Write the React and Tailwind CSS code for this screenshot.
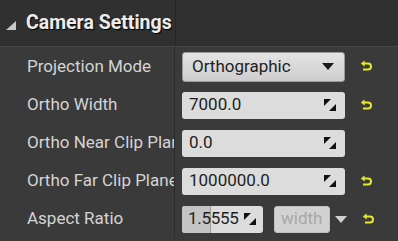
import React from 'react';

const ResetIcon = () => (
  <svg width="13" height="13" viewBox="0 0 13 13" className="shrink-0">
    <path d="M4 3.5 H8 A3 3 0 0 1 8 9.5 H3" fill="none" stroke="#e8e82a" strokeWidth="2" />
    <path d="M0.8 3.5 L4.6 0.6 L4.6 6.4 Z" fill="#e8e82a" />
  </svg>
);

const SpinIcon = () => (
  <svg width="12" height="12" viewBox="0 0 12 12" className="shrink-0">
    <path d="M0 0 H7 L0 7 Z" fill="#111" />
    <path d="M12 12 H5 L12 5 Z" fill="#111" />
  </svg>
);

const Caret = ({ color = '#1a1a1a' }) => (
  <svg width="12" height="7" viewBox="0 0 12 7" className="shrink-0">
    <path d="M0 0 H12 L6 7 Z" fill={color} />
  </svg>
);

const rows = [
  { label: 'Projection Mode', kind: 'combo', value: 'Orthographic', reset: true, h: 'h-[39px]' },
  { label: 'Ortho Width', kind: 'num', value: '7000.0', reset: true, h: 'h-[38px]' },
  { label: 'Ortho Near Clip Plane', kind: 'num', value: '0.0', reset: false, h: 'h-[38px]' },
  { label: 'Ortho Far Clip Plane', kind: 'num', value: '1000000.0', reset: true, h: 'h-[38px]' },
  { label: 'Aspect Ratio', kind: 'aspect', value: '1.5555', reset: true, h: 'h-[38px]' },
];

const App = () => {
  return (
    <div className="w-[398px] h-[241px] overflow-hidden bg-[#3a3a3a] text-[#d4d4d4]" style={{ fontFamily: 'Roboto, "Liberation Sans", sans-serif' }}>
      {/* header */}
      <div className="flex h-[47px] bg-[#303030] border-b border-[#454545]">
        <div className="flex items-center w-[176px] border-r border-[#262626]">
          <svg width="10" height="9" viewBox="0 0 10 9" className="ml-[6px] mt-[5px] shrink-0">
            <path d="M10 0 V9 H0 Z" fill="#c8c8c8" />
          </svg>
          <span className="ml-[10px] text-[19.5px] font-bold text-[#ececec] whitespace-nowrap [text-shadow:1px_1px_1px_#000]">Camera Settings</span>
        </div>
        <div className="flex-1" />
      </div>

      {/* rows */}
      <div className="flex flex-col">
        {rows.map((r) => (
          <div key={r.label} className={`flex ${r.h}`}>
            <div className="w-[175px] shrink-0 pl-[27px] flex items-center overflow-hidden whitespace-nowrap text-[17px] border-r border-[#2c2c2c]">
              {r.label}
            </div>
            <div className="flex items-center pl-[7px]">
              {r.kind === 'combo' && (
                <div className="w-[163px] h-[30px] rounded-[3px] border border-[#9a9a9a] bg-gradient-to-b from-[#e4e4e4] to-[#cdcdcd] flex items-center pl-[9px] pr-[10px] text-[17px] text-[#1e1e1e]">
                  <span className="flex-1">{r.value}</span>
                  <Caret />
                </div>
              )}
              {r.kind === 'num' && (
                <div className="w-[163px] h-[27px] rounded-[3px] bg-[#dcdcdc] flex items-center pl-[7px] pr-[9px] text-[17px] text-[#1e1e1e]">
                  <span className="flex-1">{r.value}</span>
                  <SpinIcon />
                </div>
              )}
              {r.kind === 'aspect' && (
                <div className="flex items-center">
                  <div className="relative w-[81px] h-[27px] rounded-[3px] bg-[#dcdcdc] overflow-hidden flex items-center pl-[6px] pr-[7px] text-[17px] text-[#1e1e1e]">
                    <div className="absolute left-0 top-0 bottom-0 w-[29px] bg-[#c4c4c4] border-r border-[#9c9c9c]" />
                    <span className="relative flex-1 tracking-[-0.3px]">{r.value}</span>
                    <SpinIcon />
                  </div>
                  <div className="ml-[11px] w-[56px] h-[27px] rounded-[3px] bg-[#d2d2d2] border border-[#c0c0c0] flex items-center pl-[6px] text-[17px] text-[#a8a8a8]">
                    width
                  </div>
                  <div className="ml-[5px]">
                    <Caret color="#cfcfcf" />
                  </div>
                </div>
              )}
            </div>
            {r.reset && (
              <div className="flex items-center ml-[15px]">
                <ResetIcon />
              </div>
            )}
          </div>
        ))}
      </div>
    </div>
  );
};

export default App;
